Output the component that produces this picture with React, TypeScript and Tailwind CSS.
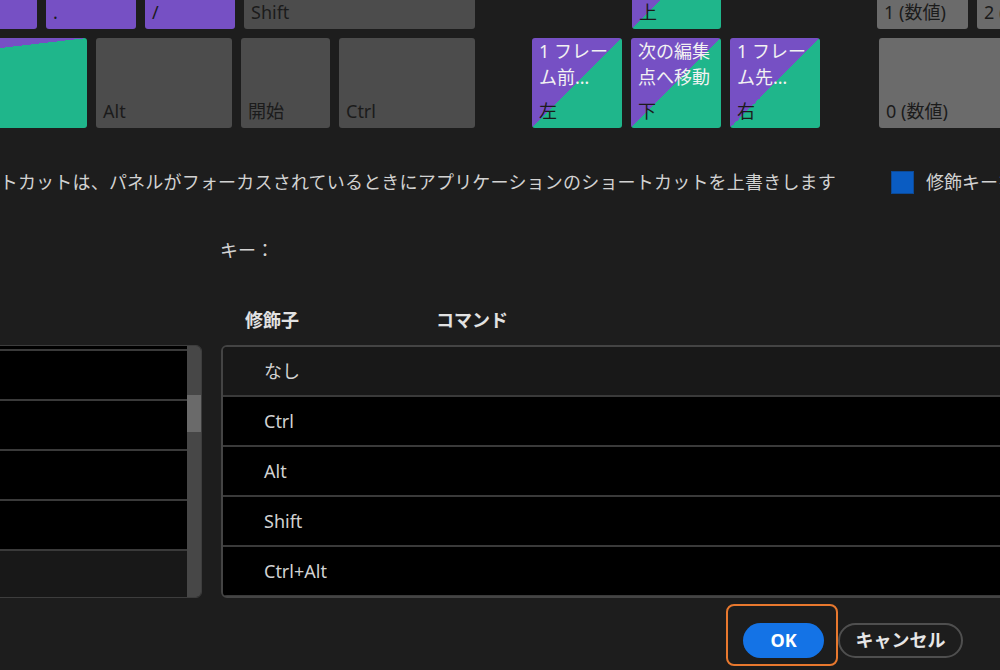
const font = { fontFamily: '"Noto Sans", "Noto Sans CJK JP", sans-serif' };

const purple = "bg-[#7650c4]";
const diag = "bg-[linear-gradient(to_bottom_right,#7650c4_50%,#1fb68b_50%)]";

type KeyProps = {
  w: string;
  bg: string;
  label?: string;
  top?: string[];
  ml?: string;
  dark?: boolean;
};

const Key: React.FC<KeyProps> = ({ w, bg, label, top, ml = "", dark = true }) => (
  <div
    className={`${w} ${bg} ${ml} h-[90px] shrink-0 rounded-[3px] flex flex-col justify-between px-[7px] pb-[5px]`}
  >
    <div className="text-[18px] leading-[26px] text-[#f2f2f2] whitespace-nowrap">
      {top?.map((t) => (
        <div key={t}>{t}</div>
      ))}
    </div>
    <div className={`text-[18px] leading-[24px] whitespace-nowrap ${dark ? "text-[#1b1b1b]" : "text-[#eee]"}`}>
      {label}
    </div>
  </div>
);

const App: React.FC = () => {
  const rows = ["Ctrl", "Alt", "Shift", "Ctrl+Alt"];
  return (
    <div className="w-[1000px] h-[670px] overflow-hidden bg-[#1d1d1d] text-[#d2d2d2]" style={font}>
      {/* keyboard, cropped */}
      <div className="h-[29px] overflow-hidden">
        <div className="flex gap-[9px] mt-[-61px]">
          <Key w="w-[90px]" bg={purple} ml="ml-[-53px]" />
          <Key w="w-[90px]" bg={purple} label="." />
          <Key w="w-[90px]" bg={purple} label="/" />
          <Key w="w-[231px]" bg="bg-[#4c4c4c]" label="Shift" />
          <Key w="w-[89px]" bg={diag} ml="ml-[148px]" label="上" />
          <Key w="w-[91px]" bg="bg-[#6b6b6b]" ml="ml-[147px]" label="1 (数値)" />
          <Key w="w-[90px]" bg="bg-[#6b6b6b]" label="2 (数値)" />
        </div>
      </div>
      <div className="flex gap-[9px] mt-[9px] h-[90px]">
        <Key w="w-[780px]" bg={diag} ml="ml-[-693px]" />
        <Key w="w-[136px]" bg="bg-[#4c4c4c]" label="Alt" />
        <Key w="w-[89px]" bg="bg-[#4c4c4c]" label="開始" />
        <Key w="w-[136px]" bg="bg-[#4c4c4c]" label="Ctrl" />
        <Key w="w-[90px]" bg={diag} ml="ml-[48px]" top={["1 フレー", "ム前…"]} label="左" />
        <Key w="w-[90px]" bg={diag} top={["次の編集", "点へ移動"]} label="下" />
        <Key w="w-[90px]" bg={diag} top={["1 フレー", "ム先…"]} label="右" />
        <Key w="w-[187px]" bg="bg-[#6b6b6b]" ml="ml-[50px]" label="0 (数値)" />
      </div>

      {/* description + checkbox */}
      <div className="flex items-center h-[24px] mt-[42px] text-[18px] whitespace-nowrap">
        <div className="w-[836px] shrink-0 overflow-hidden flex justify-end">
          <span className="tracking-[0.2px]">
            パネルのショートカットは、パネルがフォーカスされているときにアプリケーションのショートカットを上書きします
          </span>
        </div>
        <div className="ml-[55px] w-[23px] h-[23px] shrink-0 bg-[#0a5cc2] border border-[#0d4a96]" />
        <span className="ml-[12px]">修飾キーを表示</span>
      </div>

      <div className="mt-[44px] pl-[220px] text-[18px] leading-[24px]">キー：</div>

      <div className="flex mt-[46px] pl-[245px] text-[18px] leading-[24px] font-bold text-[#e2e2e2]">
        <div className="w-[191px] shrink-0">修飾子</div>
        <div>コマンド</div>
      </div>

      {/* lists */}
      <div className="flex mt-[13px] h-[253px]">
        <div className="ml-[-10px] w-[212px] shrink-0 flex border border-[#3d3d3d] rounded-[6px] overflow-hidden">
          <div className="flex-1 flex flex-col">
            <div className="h-[3px] bg-black" />
            {[0, 1, 2, 3].map((i) => (
              <div key={i} className="h-[50px] shrink-0 bg-black border-t-2 border-[#3a3a3a]" />
            ))}
            <div className="flex-1 bg-[#181818] border-t-2 border-[#3a3a3a]" />
          </div>
          <div className="w-[14px] shrink-0 bg-[#474747] pt-[49px]">
            <div className="h-[37px] bg-[#6a6a6a]" />
          </div>
        </div>

        <div className="ml-[19px] w-[800px] shrink-0 flex flex-col border-2 border-[#444] rounded-[6px] overflow-hidden">
          <div className="h-[48px] shrink-0 bg-[#181818] flex items-center pl-[41px] text-[18px]">なし</div>
          {rows.map((r) => (
            <div
              key={r}
              className="h-[50px] shrink-0 bg-black border-t-2 border-[#3a3a3a] flex items-center pl-[41px] text-[18px]"
            >
              {r}
            </div>
          ))}
          <div className="flex-1 bg-[#181818] border-t-2 border-[#3a3a3a]" />
        </div>
      </div>

      {/* buttons */}
      <div className="flex items-start ml-[726px] mt-[6px]">
        <div className="w-[112px] h-[62px] shrink-0 border-2 border-[#e8782e] rounded-[8px] pl-[15px] pt-[17px]">
          <div className="w-[81px] h-[35px] rounded-full bg-[#1473e6] flex items-center justify-center text-[18px] font-bold text-white">
            OK
          </div>
        </div>
        <div className="mt-[19px] w-[125px] h-[35px] shrink-0 rounded-full border-2 border-[#4f4f4f] flex items-center justify-center text-[18px] font-bold text-[#e6e6e6]">
          キャンセル
        </div>
      </div>
    </div>
  );
};

export default App;
